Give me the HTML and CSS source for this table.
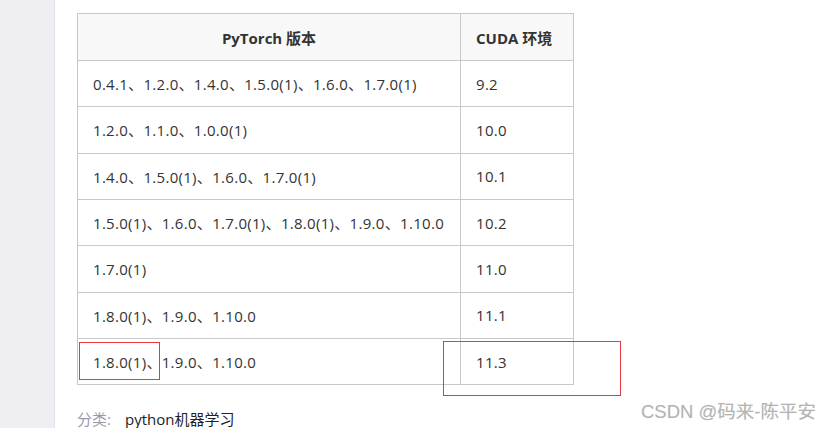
FILE: index.html
```html
<!DOCTYPE html>
<html lang="zh">
<head>
<meta charset="utf-8">
<title>PyTorch CUDA</title>
<link rel="stylesheet" href="styles.css">
</head>
<body>
<div class="page">
  <aside class="side"></aside>
  <main class="main">
    <div class="table-wrap">
      <table class="ver">
        <thead>
          <tr><th class="c1">PyTorch 版本</th><th class="c2">CUDA 环境</th></tr>
        </thead>
        <tbody>
          <tr><td>0.4.1、1.2.0、1.4.0、1.5.0(1)、1.6.0、1.7.0(1)</td><td>9.2</td></tr>
          <tr><td>1.2.0、1.1.0、1.0.0(1)</td><td>10.0</td></tr>
          <tr><td>1.4.0、1.5.0(1)、1.6.0、1.7.0(1)</td><td>10.1</td></tr>
          <tr><td>1.5.0(1)、1.6.0、1.7.0(1)、1.8.0(1)、1.9.0、1.10.0</td><td>10.2</td></tr>
          <tr><td>1.7.0(1)</td><td>11.0</td></tr>
          <tr><td>1.8.0(1)、1.9.0、1.10.0</td><td>11.1</td></tr>
          <tr><td>1.8.0(1)、1.9.0、1.10.0</td><td>11.3</td></tr>
        </tbody>
      </table>
      <div class="mark mark-a"></div>
      <div class="mark mark-b"></div>
    </div>
    <div class="tags"><span class="tag-label">分类:</span><span class="tag">python机器学习</span></div>
  </main>
  <div class="watermark">CSDN @码来-陈平安</div>
</div>
</body>
</html>
```
FILE: styles.css
```css
html, body {
  margin: 0;
  padding: 0;
  background: #fff;
}
body {
  font-family: "Open Sans", "Noto Sans CJK SC", sans-serif;
  font-size: 15px;
  color: #333;
  overflow: hidden;
}
.page {
  display: flex;
  height: 428px;
  position: relative;
  overflow: hidden;
}
.side {
  width: 54px;
  flex: none;
  background: #eeeef3;
  border-right: 1px solid #e2e2e8;
}
.main {
  padding: 13px 0 0 22px;
}
.table-wrap {
  position: relative;
  width: 496px;
}
.ver {
  border-collapse: collapse;
  width: 496px;
  table-layout: fixed;
}
.ver th, .ver td {
  border: 1px solid #c8c8c8;
  padding: 0 0 0 15px;
  text-align: left;
  height: 46.33px;
  box-sizing: border-box;
  white-space: nowrap;
}
.ver td {
  letter-spacing: 0.3px;
}
.ver th {
  background: #f8f8f8;
  font-weight: 700;
  color: #333;
  height: 47px;
}
.ver th.c1 {
  width: 383px;
  text-align: center;
  padding: 0;
}
.ver th.c2 {
  width: 113px;
}
.mark {
  position: absolute;
  border: 1px solid #e9383f;
}
.mark-a {
  left: 2px;
  top: 329px;
  width: 79px;
  height: 36px;
}
.mark-b {
  left: 366px;
  top: 328px;
  width: 176px;
  height: 53px;
}
.tags {
  margin-top: 23px;
  display: flex;
  gap: 14px;
  font-size: 15px;
}
.tag-label {
  color: #999aaa;
}
.tag {
  color: #222226;
}
.watermark {
  position: absolute;
  left: 641px;
  top: 397px;
  font-family: "Liberation Sans", "Noto Sans CJK SC", sans-serif;
  font-size: 18.5px;
  color: #b4b4b4;
  text-shadow: 0 0 1px #e6e6e6;
}
```
